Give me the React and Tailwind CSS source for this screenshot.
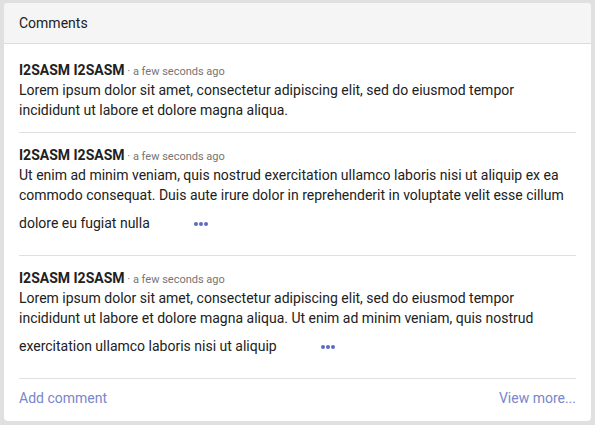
import React from 'react'

const comments = [
  {
    id: 1,
    author: 'I2SASM I2SASM',
    time: 'a few seconds ago',
    text: 'Lorem ipsum dolor sit amet, consectetur adipiscing elit, sed do eiusmod tempor incididunt ut labore et dolore magna aliqua.',
    truncated: false
  },
  {
    id: 2,
    author: 'I2SASM I2SASM',
    time: 'a few seconds ago',
    text: 'Ut enim ad minim veniam, quis nostrud exercitation ullamco laboris nisi ut aliquip ex ea commodo consequat. Duis aute irure dolor in reprehenderit in voluptate velit esse cillum dolore eu fugiat nulla',
    truncated: true
  },
  {
    id: 3,
    author: 'I2SASM I2SASM',
    time: 'a few seconds ago',
    text: 'Lorem ipsum dolor sit amet, consectetur adipiscing elit, sed do eiusmod tempor incididunt ut labore et dolore magna aliqua. Ut enim ad minim veniam, quis nostrud exercitation ullamco laboris nisi ut aliquip',
    truncated: true
  }
]

function MoreDots() {
  return (
    <button className="inline-flex items-center align-middle h-[38px] ml-[32px] px-3 gap-[1px]">
      <span className="w-[4px] h-[4px] rounded-full bg-[#5c6bc0]" />
      <span className="w-[4px] h-[4px] rounded-full bg-[#5c6bc0]" />
      <span className="w-[4px] h-[4px] rounded-full bg-[#5c6bc0]" />
    </button>
  )
}

function Comment({ c, first }) {
  return (
    <div className={`py-3 ${first ? '' : 'border-t border-[#e0e0e0]'}`}>
      <div className="h-[20px] flex items-baseline text-[14px] leading-[20px] overflow-hidden">
        <span className="font-bold text-[#212121]">{c.author}</span>
        <span className="text-[11px] text-[#757575] whitespace-pre"> · {c.time}</span>
      </div>
      <p className="text-[14px] leading-[20px] text-[#212121]">
        {c.text}
        {c.truncated && <MoreDots />}
      </p>
    </div>
  )
}

export default function App() {
  return (
    <div className="min-h-screen bg-[#e0e0e0] px-[4px] pt-[3px] pb-[4px] font-['Roboto',sans-serif]">
      <div className="bg-white rounded-[4px] overflow-hidden">
        <div className="h-[41px] bg-[#f5f5f5] border-b border-[#dcdcdc] flex items-center px-[15px] text-[14px] text-[#212121]">
          Comments
        </div>
        <div className="px-[15px] pt-[4px]">
          {comments.map((c, i) => <Comment key={c.id} c={c} first={i === 0} />)}
          <div className="border-t border-[#e0e0e0] pt-[9px] pb-[13px] flex items-center justify-between text-[14px] leading-[20px] text-[#7986cb]">
            <a href="#">Add comment</a>
            <a href="#">View more...</a>
          </div>
        </div>
      </div>
    </div>
  )
}
